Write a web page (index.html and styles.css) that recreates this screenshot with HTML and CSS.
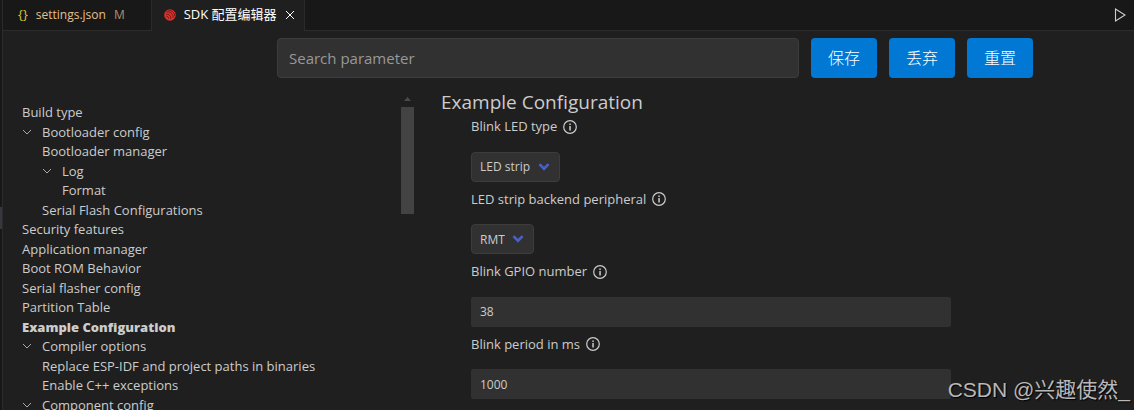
FILE: index.html
```html
<!DOCTYPE html>
<html lang="zh-CN">
<head>
    <meta charset="UTF-8">
    <meta name="viewport" content="width=device-width, initial-scale=1.0">
    <title>SDK 配置编辑器</title>
    <link rel="stylesheet" href="styles.css">
</head>
<body>
    <svg class="sprite" aria-hidden="true">
        <symbol id="chevron" viewBox="0 0 10 10"><path d="M1 3l4 4 4-4" fill="none" stroke="currentColor"/></symbol>
        <symbol id="arrow" viewBox="0 0 10 7"><path d="M1 1l4 4 4-4" fill="none" stroke="currentColor" stroke-width="2.4"/></symbol>
        <symbol id="info" viewBox="0 0 14 14">
            <circle cx="7" cy="7" r="6.3" fill="none" stroke="currentColor" stroke-width="1.2"/>
            <path d="M6.3 3.6h1.5v1.5H6.3zM6.3 6.1h1.5v4.3H6.3z" fill="currentColor"/>
        </symbol>
    </svg>
    <div class="edge"><div class="sash"></div></div>
    <div class="editor">
        <header class="tabs">
            <a class="tab" href="#">
                <span class="braces">{}</span>
                <span>settings.json</span>
                <span class="status">M</span>
            </a>
            <div class="tab active">
                <svg class="logo" viewBox="0 0 12 12" aria-hidden="true">
                    <circle cx="6" cy="6" r="5.8" fill="#e02f2a"/>
                    <g fill="none" stroke="#5a1715" stroke-width="0.8">
                        <path d="M2.6 2.8c3.6-.6 6.8 2.4 6.6 6.2"/>
                        <path d="M2.2 5c2.6-.3 4.8 1.9 4.6 4.8"/>
                        <path d="M4.5 1.2c3.5 0 6.2 2.7 6.3 6"/>
                        <path d="M2.4 7.2c1.3 0 2.3 1 2.2 2.5"/>
                    </g>
                </svg>
                <span>SDK 配置编辑器</span>
                <button class="icon-button" type="button" aria-label="Close">
                    <svg viewBox="0 0 10 10" width="10" height="10"><path d="M1 1l8 8M9 1l-8 8" stroke="currentColor"/></svg>
                </button>
            </div>
            <button class="icon-button run" type="button" aria-label="Run">
                <svg viewBox="0 0 12 14" width="12" height="14"><path d="M1.5 1v12L11 7z" fill="none" stroke="currentColor" stroke-width="1.1"/></svg>
            </button>
        </header>
        <form class="toolbar">
            <input class="search" type="text" placeholder="Search parameter" aria-label="Search parameter">
            <button type="button">保存</button>
            <button type="button">丢弃</button>
            <button type="button">重置</button>
        </form>
        <div class="content">
            <nav class="tree">
                <ul>
                    <li><a href="#">Build type</a></li>
                    <li><svg class="chevron"><use href="#chevron"/></svg><a href="#">Bootloader config</a>
                        <ul>
                            <li><a href="#">Bootloader manager</a></li>
                            <li><svg class="chevron"><use href="#chevron"/></svg><a href="#">Log</a>
                                <ul>
                                    <li><a href="#">Format</a></li>
                                </ul>
                            </li>
                            <li><a href="#">Serial Flash Configurations</a></li>
                        </ul>
                    </li>
                    <li><a href="#">Security features</a></li>
                    <li><a href="#">Application manager</a></li>
                    <li><a href="#">Boot ROM Behavior</a></li>
                    <li><a href="#">Serial flasher config</a></li>
                    <li><a href="#">Partition Table</a></li>
                    <li><a class="selected" href="#">Example Configuration</a></li>
                    <li><svg class="chevron"><use href="#chevron"/></svg><a href="#">Compiler options</a>
                        <ul>
                            <li><a href="#">Replace ESP-IDF and project paths in binaries</a></li>
                            <li><a href="#">Enable C++ exceptions</a></li>
                        </ul>
                    </li>
                    <li><svg class="chevron"><use href="#chevron"/></svg><a href="#">Component config</a></li>
                </ul>
            </nav>
            <div class="scrollbar">
                <div class="scroll-up"></div>
                <div class="thumb"></div>
            </div>
            <main class="settings">
                <h2>Example Configuration</h2>
                <div class="field">
                    <div class="label"><label for="led-type">Blink LED type</label><svg class="info"><use href="#info"/></svg></div>
                    <div class="select">
                        <select id="led-type"><option>LED strip</option></select>
                        <svg class="arrow"><use href="#arrow"/></svg>
                    </div>
                </div>
                <div class="field">
                    <div class="label"><label for="backend">LED strip backend peripheral</label><svg class="info"><use href="#info"/></svg></div>
                    <div class="select">
                        <select id="backend"><option>RMT</option></select>
                        <svg class="arrow"><use href="#arrow"/></svg>
                    </div>
                </div>
                <div class="field">
                    <div class="label"><label for="gpio">Blink GPIO number</label><svg class="info"><use href="#info"/></svg></div>
                    <input id="gpio" type="text" value="38">
                </div>
                <div class="field">
                    <div class="label"><label for="period">Blink period in ms</label><svg class="info"><use href="#info"/></svg></div>
                    <input id="period" type="text" value="1000">
                </div>
            </main>
        </div>
    </div>
    <div class="watermark">CSDN @兴趣使然_</div>
</body>
</html>
```

FILE: styles.css
```css
* {
    box-sizing: border-box;
}
body {
    display: flex;
    height: 100vh;
    margin: 0;
    overflow: hidden;
    background-color: #1f1f1f;
    color: #cccccc;
    font-family: "Open Sans", "Noto Sans CJK SC", sans-serif;
    font-size: 13px;
    line-height: 1.5;
}
a {
    color: inherit;
    text-decoration: none;
}
button, input, select {
    font-family: inherit;
    color: inherit;
}
.sprite {
    position: absolute;
    width: 0;
    height: 0;
}
.edge {
    flex: none;
    width: 3px;
    padding-top: 207px;
    background-color: #181818;
    border-right: 1px solid #2b2b2b;
}
.sash {
    height: 22px;
    background-color: #37373d;
}
.editor {
    flex: 1;
    min-width: 0;
    display: flex;
    flex-direction: column;
}
.tabs {
    flex: none;
    display: flex;
    height: 31px;
    background-color: #181818;
    box-shadow: inset 0 -1px #2b2b2b;
}
.tab {
    display: flex;
    align-items: center;
    gap: 8px;
    padding: 0 26px 2px 15px;
    border-right: 1px solid #2b2b2b;
    color: #e2c08d;
    font-size: 12px;
}
.tab.active {
    padding: 0 9px 2px 12px;
    background-color: #1f1f1f;
    color: #ffffff;
    font-size: 13px;
}
.braces {
    color: #cbcb41;
    font-size: 13px;
}
.status {
    opacity: 0.7;
}
.logo {
    width: 12px;
    height: 12px;
}
.icon-button {
    display: flex;
    align-items: center;
    padding: 0;
    background: none;
    border: none;
}
.run {
    margin-left: auto;
    padding: 0 8px 2px;
}
.toolbar {
    flex: none;
    display: flex;
    gap: 12px;
    margin: 0;
    padding: 7px 101px 0 274px;
}
.toolbar button {
    width: 66px;
    height: 40px;
    padding: 0 0 2px;
    background-color: #0078d4;
    border: none;
    border-radius: 4px;
    color: #ffffff;
    font-size: 16px;
    font-weight: 300;
}
.search {
    flex: 1;
    min-width: 0;
    height: 40px;
    padding: 0 11px;
    background-color: #313131;
    border: 1px solid #3c3c3c;
    border-radius: 4px;
    font-size: 15px;
}
.search::placeholder {
    color: #989898;
}
.content {
    flex: 1;
    display: flex;
    min-height: 0;
    padding-top: 14px;
}
.tree {
    width: 398px;
    padding: 11px 0 0 19px;
    overflow: hidden;
}
.tree ul {
    margin: 0;
    padding: 0;
    list-style: none;
}
.tree ul ul {
    padding-left: 20px;
}
.chevron {
    width: 10px;
    height: 10px;
    margin-right: 10px;
    color: #a8a8a8;
}
.selected {
    font-weight: 800;
}
.scrollbar {
    width: 13px;
}
.scroll-up {
    width: 7px;
    height: 4px;
    margin: 5px auto 6px;
    background-color: #4a4a4a;
    clip-path: polygon(50% 0, 100% 100%, 0 100%);
}
.thumb {
    height: 107px;
    background-color: #434343;
}
.settings {
    flex: 1;
    min-width: 0;
    padding-left: 27px;
}
.settings h2 {
    margin: 0 0 5px;
    font-size: 19px;
    font-weight: normal;
    line-height: 20px;
}
.field {
    width: 480px;
    margin: 0 0 8px 30px;
}
.label {
    display: flex;
    align-items: center;
    gap: 6px;
    margin-bottom: 15px;
}
.info {
    width: 14px;
    height: 14px;
}
.field input {
    display: block;
    width: 100%;
    height: 30px;
    padding: 0 9px;
    background-color: #313131;
    border: none;
    border-radius: 2px;
    font-size: 12px;
}
.select {
    display: inline-grid;
    align-items: center;
    vertical-align: top;
}
.select select {
    grid-area: 1 / 1;
    height: 30px;
    padding: 0 28px 0 8px;
    appearance: none;
    background-color: #313131;
    border: 1px solid #3c3c3c;
    border-radius: 4px;
    font-size: 12px;
}
.arrow {
    grid-area: 1 / 1;
    justify-self: end;
    width: 12px;
    height: 8px;
    margin-right: 10px;
    color: #485fc7;
    pointer-events: none;
}
.watermark {
    position: absolute;
    right: 4px;
    bottom: 4px;
    color: #b8b8b8;
    font-family: "Liberation Sans", "Noto Sans CJK SC", sans-serif;
    font-size: 21px;
    line-height: 32px;
    text-shadow: 1px 1px 1px #000000;
}
```
